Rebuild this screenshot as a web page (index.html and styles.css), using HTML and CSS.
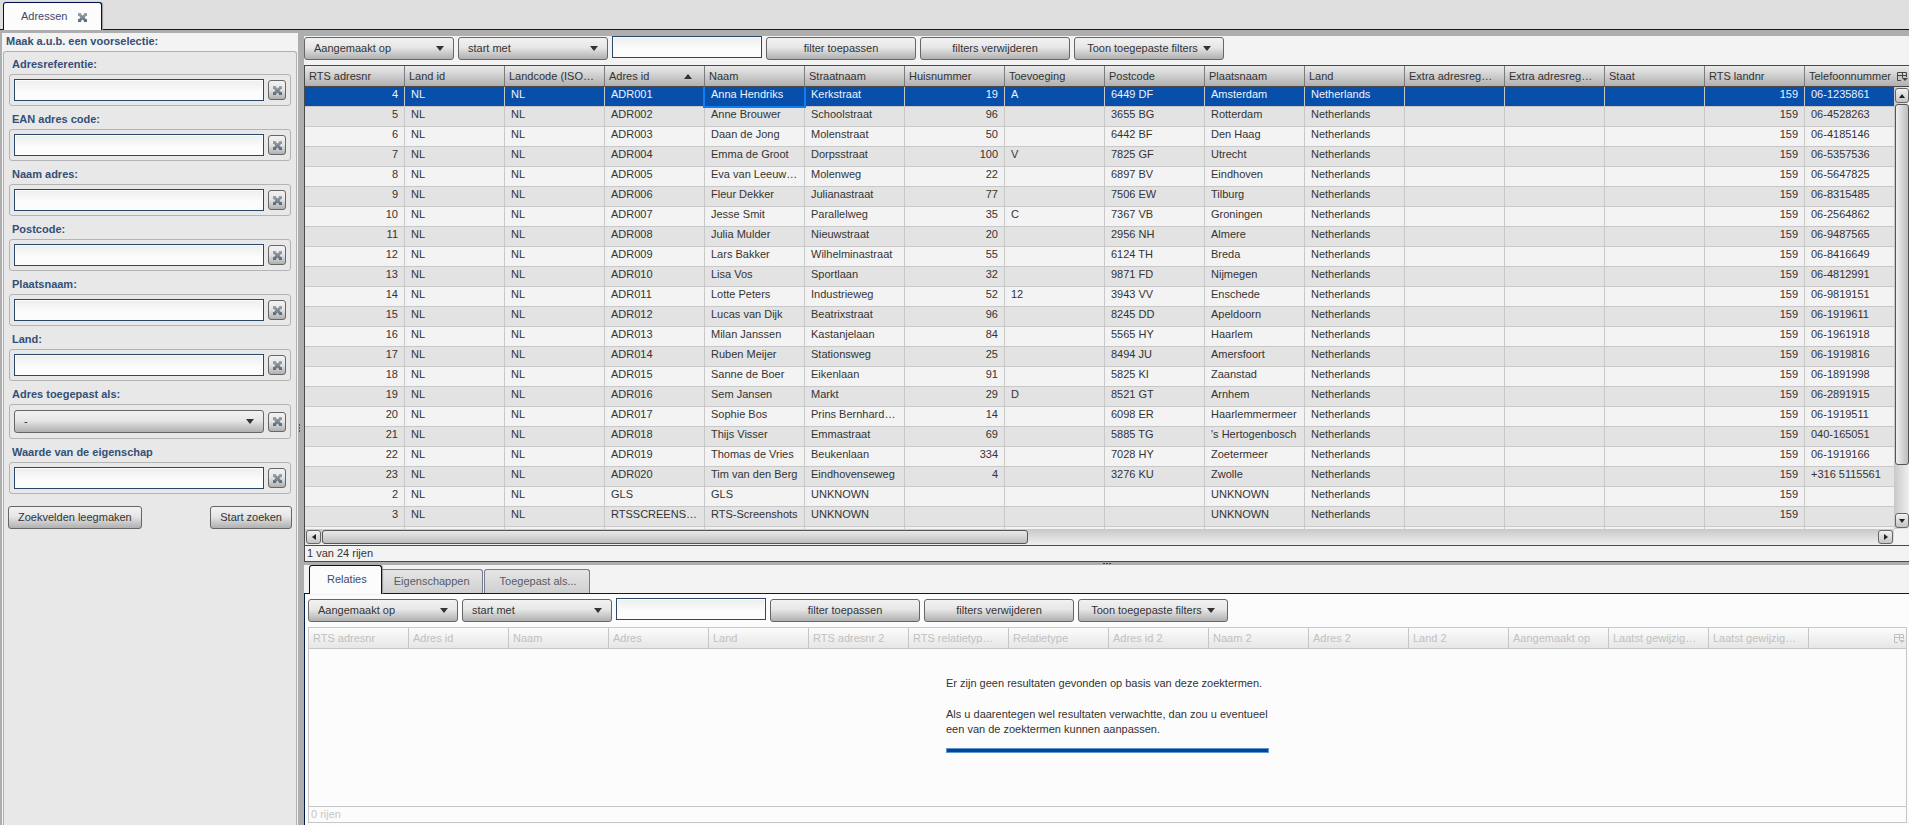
FILE: index.html
```html
<!DOCTYPE html>
<html lang="nl">
<head>
    <meta charset="utf-8">
    <title>Adressen</title>
    <link rel="stylesheet" href="styles.css">
</head>
<body>
    <svg class="defs" aria-hidden="true">
        <defs>
            <linearGradient id="cross-fill" x1="0" y1="0" x2="0" y2="1">
                <stop offset="0" stop-color="#a0a6ac"/>
                <stop offset="1" stop-color="#56687b"/>
            </linearGradient>
            <symbol id="cross" viewBox="0 0 9 9">
                <path fill="url(#cross-fill)" d="M0 0H3V1L4.5 2.5L6 1V0H9V3H8L6.5 4.5L8 6H9V9H6V8L4.5 6.5L3 8V9H0V6H1L2.5 4.5L1 3H0Z"/>
            </symbol>
            <symbol id="columns" viewBox="0 0 11 10">
                <path fill="none" stroke="currentColor" d="M4 8.5H.5V.5H9.5V5M.5 3.5H9.5M5.5 1V6"/>
                <path fill="currentColor" d="M5 6H11L8 9Z"/>
            </symbol>
        </defs>
    </svg>

    <header class="topbar">
        <div class="tab tab-active tab-main">
            <span>Adressen</span>
            <button class="tab-close" type="button" aria-label="Sluiten"><svg class="cross"><use href="#cross"/></svg></button>
        </div>
    </header>

    <div class="workspace">
        <aside class="sidebar">
            <h2 class="sidebar-title">Maak a.u.b. een voorselectie:</h2>
            <form class="search">
                <div class="field">
                    <label for="ref">Adresreferentie:</label>
                    <div class="field-box"><input class="text" id="ref" type="text"><button class="clear" type="button" aria-label="Wissen"><svg class="cross"><use href="#cross"/></svg></button></div>
                </div>
                <div class="field">
                    <label for="ean">EAN adres code:</label>
                    <div class="field-box"><input class="text" id="ean" type="text"><button class="clear" type="button" aria-label="Wissen"><svg class="cross"><use href="#cross"/></svg></button></div>
                </div>
                <div class="field">
                    <label for="naam">Naam adres:</label>
                    <div class="field-box"><input class="text" id="naam" type="text"><button class="clear" type="button" aria-label="Wissen"><svg class="cross"><use href="#cross"/></svg></button></div>
                </div>
                <div class="field">
                    <label for="postcode">Postcode:</label>
                    <div class="field-box"><input class="text" id="postcode" type="text"><button class="clear" type="button" aria-label="Wissen"><svg class="cross"><use href="#cross"/></svg></button></div>
                </div>
                <div class="field">
                    <label for="plaats">Plaatsnaam:</label>
                    <div class="field-box"><input class="text" id="plaats" type="text"><button class="clear" type="button" aria-label="Wissen"><svg class="cross"><use href="#cross"/></svg></button></div>
                </div>
                <div class="field">
                    <label for="land">Land:</label>
                    <div class="field-box"><input class="text" id="land" type="text"><button class="clear" type="button" aria-label="Wissen"><svg class="cross"><use href="#cross"/></svg></button></div>
                </div>
                <div class="field">
                    <label for="toegepast">Adres toegepast als:</label>
                    <div class="field-box field-box-select"><select class="btn select" id="toegepast"><option>-</option></select><button class="clear" type="button" aria-label="Wissen"><svg class="cross"><use href="#cross"/></svg></button></div>
                </div>
                <div class="field">
                    <label for="waarde">Waarde van de eigenschap</label>
                    <div class="field-box"><input class="text" id="waarde" type="text"><button class="clear" type="button" aria-label="Wissen"><svg class="cross"><use href="#cross"/></svg></button></div>
                </div>
                <div class="search-actions">
                    <button class="btn" type="reset">Zoekvelden leegmaken</button>
                    <button class="btn" type="button">Start zoeken</button>
                </div>
            </form>
        </aside>

        <div class="splitter splitter-v"><span class="grip"></span></div>

        <main class="content">
            <section class="pane">
                <div class="toolbar">
                    <select class="btn select" aria-label="Kolom"><option>Aangemaakt op</option></select>
                    <select class="btn select" aria-label="Vergelijking"><option>start met</option></select>
                    <input class="text" type="text" aria-label="Filterwaarde">
                    <button class="btn" type="button">filter toepassen</button>
                    <button class="btn" type="button">filters verwijderen</button>
                    <button class="btn btn-menu" type="button">Toon toegepaste filters</button>
                </div>
                <div class="grid">
                    <div class="grid-view">
                        <table class="data">
                            <thead>
                                <tr>
                                    <th>RTS adresnr</th>
                                    <th>Land id</th>
                                    <th>Landcode (ISO-3166)</th>
                                    <th class="sorted">Adres id</th>
                                    <th>Naam</th>
                                    <th>Straatnaam</th>
                                    <th>Huisnummer</th>
                                    <th>Toevoeging</th>
                                    <th>Postcode</th>
                                    <th>Plaatsnaam</th>
                                    <th>Land</th>
                                    <th>Extra adresregel 1</th>
                                    <th>Extra adresregel 2</th>
                                    <th>Staat</th>
                                    <th>RTS landnr</th>
                                    <th class="last">Telefoonnummer</th>
                                </tr>
                            </thead>
                            <tbody id="adressen"></tbody>
                        </table>
                    </div>
                    <button class="column-control" type="button" aria-label="Kolommen"><svg><use href="#columns"/></svg></button>
                    <div class="scroll scroll-v">
                        <button class="scroll-btn up" type="button" aria-label="Omhoog"></button>
                        <span class="thumb"></span>
                        <button class="scroll-btn down" type="button" aria-label="Omlaag"></button>
                    </div>
                    <div class="scroll scroll-h">
                        <button class="scroll-btn left" type="button" aria-label="Links"></button>
                        <span class="thumb"></span>
                        <button class="scroll-btn right" type="button" aria-label="Rechts"></button>
                    </div>
                    <div class="status">1 van 24 rijen</div>
                </div>
            </section>

            <div class="splitter splitter-h"><span class="grip"></span></div>

            <section class="pane pane-detail">
                <nav class="tabs">
                    <button class="tab tab-active" type="button">Relaties</button>
                    <button class="tab" type="button">Eigenschappen</button>
                    <button class="tab" type="button">Toegepast als...</button>
                </nav>
                <div class="detail">
                    <div class="toolbar">
                        <select class="btn select" aria-label="Kolom"><option>Aangemaakt op</option></select>
                        <select class="btn select" aria-label="Vergelijking"><option>start met</option></select>
                        <input class="text" type="text" aria-label="Filterwaarde">
                        <button class="btn" type="button">filter toepassen</button>
                        <button class="btn" type="button">filters verwijderen</button>
                        <button class="btn btn-menu" type="button">Toon toegepaste filters</button>
                    </div>
                    <div class="grid grid-disabled">
                        <div class="grid-view">
                            <table class="data">
                                <thead>
                                    <tr>
                                        <th>RTS adresnr</th>
                                        <th>Adres id</th>
                                        <th>Naam</th>
                                        <th>Adres</th>
                                        <th>Land</th>
                                        <th>RTS adresnr 2</th>
                                        <th>RTS relatietypenummer</th>
                                        <th>Relatietype</th>
                                        <th>Adres id 2</th>
                                        <th>Naam 2</th>
                                        <th>Adres 2</th>
                                        <th>Land 2</th>
                                        <th>Aangemaakt op</th>
                                        <th>Laatst gewijzigd op</th>
                                        <th>Laatst gewijzigd door</th>
                                        <th class="last"></th>
                                    </tr>
                                </thead>
                            </table>
                            <div class="empty">
                                <p>Er zijn geen resultaten gevonden op basis van deze zoektermen.</p>
                                <p>Als u daarentegen wel resultaten verwachtte, dan zou u eventueel een van de zoektermen kunnen aanpassen.</p>
                                <div class="empty-bar"></div>
                            </div>
                        </div>
                        <button class="column-control" type="button" aria-label="Kolommen" disabled><svg><use href="#columns"/></svg></button>
                        <div class="status">0 rijen</div>
                    </div>
                </div>
            </section>
        </main>
    </div>
    <script src="script.js"></script>
</body>
</html>
```

FILE: styles.css
```css
* {
    box-sizing: border-box;
}

body {
    margin: 0;
    height: 100vh;
    display: flex;
    flex-direction: column;
    overflow: hidden;
    background: #aeaeae;
    color: #333;
    font: 11px/15px "Liberation Sans", Arial, sans-serif;
}

button, input, select {
    margin: 0;
    padding: 0;
    font: inherit;
    color: inherit;
}

.defs {
    position: absolute;
    width: 0;
    height: 0;
}

/* tabs */
.topbar {
    display: flex;
    align-items: flex-end;
    height: 30px;
    padding-left: 3px;
    background: #dfdfdf;
    border-bottom: 1px solid #001a4a;
}

.tab {
    height: 24px;
    padding: 0 12px 0 15px;
    border: 1px solid #737a8c;
    border-bottom: 0;
    border-radius: 3px 3px 0 0;
    background: linear-gradient(#e6e6e6, #cfcfcf);
    color: #555b66;
}

.tab-active {
    position: relative;
    z-index: 1;
    height: 29px;
    margin-bottom: -1px;
    padding: 0 14px 0 17px;
    border-color: #00104f;
    background: #fcfcfc;
    box-shadow: 1px 0 1px #999;
    color: #3c4b6b;
}

.tab-main {
    display: flex;
    align-items: center;
    gap: 11px;
    height: 28px;
}

.tab-close {
    display: flex;
    margin-top: 2px;
    border: 0;
    background: none;
}

.cross {
    display: block;
    width: 9px;
    height: 9px;
}

/* sidebar */
.workspace {
    flex: 1;
    display: flex;
    min-height: 0;
}

.sidebar {
    width: 296px;
    margin: 3px 0 0 2px;
    padding: 0 1px;
    display: flex;
    flex-direction: column;
    background: #f3f3f3;
}

.sidebar-title {
    margin: 0;
    padding: 0 0 2px 3px;
    font-size: 11px;
    line-height: 16px;
    color: #344f77;
}

.search {
    flex: 1;
    display: flex;
    flex-direction: column;
    gap: 3px;
    padding: 2px 5px 0;
    border: 1px solid #b0b0b0;
    border-bottom: 0;
    border-radius: 3px 3px 0 0;
    background: #e8e8e8;
}

.field label {
    display: block;
    padding-left: 3px;
    font-weight: bold;
    line-height: 20px;
    color: #344f77;
}

.field-box {
    display: flex;
    align-items: center;
    gap: 4px;
    padding: 4px;
    border: 1px solid #b4b4b4;
    border-radius: 3px;
}

.field-box-select {
    min-height: 35px;
}

.field-box .text,
.field-box .select {
    flex: 1;
    min-width: 0;
}

.text {
    height: 22px;
    padding: 0 4px;
    border: 1px solid #2c4668;
    border-radius: 0;
    background: linear-gradient(#ededed, #fcfcfc 60%);
    box-shadow: inset 0 0 0 1px #fcfcfc;
}

.btn,
.clear,
.scroll-btn {
    border: 1px solid #666;
    border-radius: 3px;
    background: linear-gradient(#f2f2f2, #e6e6e6 45%, #b0b0b0);
}

.btn {
    height: 23px;
    padding: 0 9px;
}

.clear {
    display: flex;
    align-items: center;
    justify-content: center;
    width: 18px;
    height: 20px;
}

.select {
    appearance: none;
    padding: 0 24px 0 9px;
    background:
        url("data:image/svg+xml,%3Csvg xmlns='http://www.w3.org/2000/svg' width='8' height='5'%3E%3Cpath fill='%23333' d='M0 0h8L4 5z'/%3E%3C/svg%3E") right 9px center no-repeat,
        linear-gradient(#f2f2f2, #e6e6e6 45%, #b0b0b0);
}

.btn-menu::after {
    content: "";
    display: inline-block;
    margin: 0 0 1px 5px;
    border: 4px solid transparent;
    border-top: 5px solid #333;
    border-bottom: 0;
}

.search-actions {
    display: flex;
    justify-content: space-between;
    margin: 9px -1px 0;
}

/* splitters */
.splitter {
    display: flex;
    align-items: center;
    justify-content: center;
}

.splitter-v {
    width: 6px;
    justify-content: flex-start;
    padding-left: 1px;
}

.splitter-v .grip {
    width: 1px;
    height: 8px;
    background: repeating-linear-gradient(#555 0 2px, transparent 2px 3px);
}

.splitter-h .grip {
    width: 8px;
    height: 1px;
    background: repeating-linear-gradient(90deg, #444 0 2px, transparent 2px 3px);
}

/* right side */
.content {
    flex: 1;
    min-width: 0;
    margin-top: 6px;
    display: grid;
    grid-template-columns: minmax(0, 1fr);
    grid-template-rows: minmax(0, 263fr) 3px minmax(0, 130fr);
}

.pane {
    display: flex;
    flex-direction: column;
    min-height: 0;
    background: #f3f3f3;
}

.toolbar {
    display: flex;
    gap: 4px;
    height: 29px;
}

.toolbar .btn {
    width: 150px;
    margin-top: 1px;
}

.toolbar .text {
    width: 150px;
}

/* the header runs over the scrollbar column, so the view spans both */
.grid {
    flex: 1;
    min-height: 0;
    display: grid;
    grid-template-columns: minmax(0, 1fr) 15px;
    grid-template-rows: 21px minmax(0, 1fr) auto auto;
    border: 1px solid #4a4a4a;
    border-right: 0;
}

.grid-view {
    grid-area: 1 / 1 / 3 / 3;
    overflow: hidden;
}

.data {
    width: 100%;
    table-layout: fixed;
    border-collapse: separate;
    border-spacing: 0;
}

.data th {
    width: 100px;
    height: 21px;
    padding: 0 9px 0 4px;
    border-right: 1px solid #7a7a7a;
    border-bottom: 1px solid #4a4a4a;
    background: linear-gradient(#ebebeb, #b0b0b0);
    font-weight: normal;
    text-align: left;
    white-space: nowrap;
    overflow: hidden;
    text-overflow: ellipsis;
}

.data th.last {
    width: auto;
    border-right: 0;
}

.data th.sorted::after {
    content: "";
    float: right;
    margin: 5px 3px 0 0;
    border: 4px solid transparent;
    border-bottom: 5px solid #333;
    border-top: 0;
}

.data td {
    height: 20px;
    padding: 0 5px 0 6px;
    border-right: 1px solid #c8c8c8;
    border-bottom: 1px solid #c8c8c8;
    background: #f3f3f3;
    line-height: 14px;
    vertical-align: top;
    white-space: nowrap;
    overflow: hidden;
    text-overflow: ellipsis;
}

.data tbody tr:nth-child(even) td {
    background: #e3e3e3;
}

.data tbody tr.selected td {
    background: #084fab;
    color: #eef3fa;
}

.data td.num {
    padding-right: 6px;
    text-align: right;
}

.data td.focus {
    position: relative;
    overflow: visible;
}

.data td.focus::after {
    content: "";
    position: absolute;
    inset: 0 -2px -2px -2px;
    border: 2px solid #0d7ff0;
    border-top: 0;
}

.column-control {
    grid-area: 1 / 2;
    z-index: 1;
    align-self: center;
    border: 0;
    background: none;
    color: #444;
}

.column-control svg {
    display: block;
    width: 11px;
    height: 10px;
    margin-left: 3px;
}

.status {
    grid-area: 4 / 1 / 5 / 3;
    padding-left: 2px;
    border-top: 1px solid #4a4a4a;
}

/* scrollbars */
.scroll {
    z-index: 1;
    display: flex;
    gap: 1px;
    padding: 1px;
}

.scroll-v {
    grid-area: 2 / 2;
    flex-direction: column;
    padding-right: 0;
    background: linear-gradient(90deg, #c8c8c8, #efefef);
}

.scroll-h {
    grid-area: 3 / 1;
    height: 16px;
    background: linear-gradient(#c8c8c8, #efefef);
}

.scroll-btn {
    display: flex;
    align-items: center;
    justify-content: center;
    width: 15px;
    height: 14px;
    background: linear-gradient(#f2f2f2, #c4c4c4);
}

.scroll-v .scroll-btn {
    width: 14px;
    height: 15px;
}

.scroll-btn::before {
    content: "";
    border: 3px solid transparent;
}

.up::before {
    border-bottom: 4px solid #222;
    border-top: 0;
}

.down::before {
    border-top: 4px solid #222;
    border-bottom: 0;
}

.left::before {
    border-right: 4px solid #222;
    border-left: 0;
}

.right::before {
    border-left: 4px solid #222;
    border-right: 0;
}

.down {
    margin-top: auto;
}

.right {
    margin-left: auto;
}

.thumb {
    border: 1px solid #555;
    border-radius: 3px;
}

.scroll-v .thumb {
    height: 82%;
    background: linear-gradient(90deg, #f0f0f0, #bdbdbd);
}

.scroll-h .thumb {
    width: 44.5%;
    background: linear-gradient(#eaeaea, #bdbdbd);
}

/* detail pane */
.tabs {
    display: flex;
    align-items: flex-end;
    height: 29px;
    padding-left: 5px;
    border-bottom: 1px solid #001a4a;
}

.tabs .tab {
    margin-right: 1px;
}

.tabs .tab-active {
    padding-bottom: 2px;
    margin-right: -4px;
}

.detail {
    flex: 1;
    min-height: 0;
    display: flex;
    flex-direction: column;
    padding: 4px 2px 2px 3px;
    border-left: 1px solid #001a4a;
    background: #fcfcfc;
}

.grid-disabled {
    border: 1px solid #c6c6c6;
}

.grid-disabled .data th {
    border-color: #c6c6c6;
    background: linear-gradient(#fcfcfc, #e6e6e6);
    color: #c0c0c0;
}

.grid-disabled .status {
    border-color: #c6c6c6;
    color: #c6c6c6;
}

.grid-disabled .column-control {
    color: #c0c0c0;
}

.empty {
    width: 323px;
    margin: 27px auto 0;
}

.empty p {
    margin: 0 0 16px;
}

.empty p + p {
    margin-bottom: 11px;
}

.empty-bar {
    height: 5px;
    border: 1px solid #5c96cc;
    background: #0045a0;
}
```

FILE: script.js
```js
// id, adres id, naam, straat, huisnummer, toevoeging, postcode, plaats, telefoon
var adressen = [
    [4, 'ADR001', 'Anna Hendriks', 'Kerkstraat', 19, 'A', '6449 DF', 'Amsterdam', '06-1235861'],
    [5, 'ADR002', 'Anne Brouwer', 'Schoolstraat', 96, '', '3655 BG', 'Rotterdam', '06-4528263'],
    [6, 'ADR003', 'Daan de Jong', 'Molenstraat', 50, '', '6442 BF', 'Den Haag', '06-4185146'],
    [7, 'ADR004', 'Emma de Groot', 'Dorpsstraat', 100, 'V', '7825 GF', 'Utrecht', '06-5357536'],
    [8, 'ADR005', 'Eva van Leeuwenhoek', 'Molenweg', 22, '', '6897 BV', 'Eindhoven', '06-5647825'],
    [9, 'ADR006', 'Fleur Dekker', 'Julianastraat', 77, '', '7506 EW', 'Tilburg', '06-8315485'],
    [10, 'ADR007', 'Jesse Smit', 'Parallelweg', 35, 'C', '7367 VB', 'Groningen', '06-2564862'],
    [11, 'ADR008', 'Julia Mulder', 'Nieuwstraat', 20, '', '2956 NH', 'Almere', '06-9487565'],
    [12, 'ADR009', 'Lars Bakker', 'Wilhelminastraat', 55, '', '6124 TH', 'Breda', '06-8416649'],
    [13, 'ADR010', 'Lisa Vos', 'Sportlaan', 32, '', '9871 FD', 'Nijmegen', '06-4812991'],
    [14, 'ADR011', 'Lotte Peters', 'Industrieweg', 52, '12', '3943 VV', 'Enschede', '06-9819151'],
    [15, 'ADR012', 'Lucas van Dijk', 'Beatrixstraat', 96, '', '8245 DD', 'Apeldoorn', '06-1919611'],
    [16, 'ADR013', 'Milan Janssen', 'Kastanjelaan', 84, '', '5565 HY', 'Haarlem', '06-1961918'],
    [17, 'ADR014', 'Ruben Meijer', 'Stationsweg', 25, '', '8494 JU', 'Amersfoort', '06-1919816'],
    [18, 'ADR015', 'Sanne de Boer', 'Eikenlaan', 91, '', '5825 KI', 'Zaanstad', '06-1891998'],
    [19, 'ADR016', 'Sem Jansen', 'Markt', 29, 'D', '8521 GT', 'Arnhem', '06-2891915'],
    [20, 'ADR017', 'Sophie Bos', 'Prins Bernhardstraat', 14, '', '6098 ER', 'Haarlemmermeer', '06-1919511'],
    [21, 'ADR018', 'Thijs Visser', 'Emmastraat', 69, '', '5885 TG', "'s Hertogenbosch", '040-165051'],
    [22, 'ADR019', 'Thomas de Vries', 'Beukenlaan', 334, '', '7028 HY', 'Zoetermeer', '06-1919166'],
    [23, 'ADR020', 'Tim van den Berg', 'Eindhovenseweg', 4, '', '3276 KU', 'Zwolle', '+316 5115561'],
    [2, 'GLS', 'GLS', 'UNKNOWN', '', '', '', 'UNKNOWN', ''],
    [3, 'RTSSCREENSHOTS', 'RTS-Screenshots', 'UNKNOWN', '', '', '', 'UNKNOWN', ''],
    []
];

var numeric = [0, 6, 14];
var body = document.getElementById('adressen');

adressen.forEach(function (a, index) {
    var row = body.insertRow();
    var cells = [a[0], 'NL', 'NL', a[1], a[2], a[3], a[4], a[5], a[6], a[7], 'Netherlands', '', '', '', 159, a[8]];

    if (index === 0) {
        row.className = 'selected';
    }
    cells.forEach(function (value, i) {
        var cell = row.insertCell();
        cell.textContent = a.length ? value : '';
        if (numeric.indexOf(i) !== -1) {
            cell.className = 'num';
        }
        if (index === 0 && i === 4) {
            cell.className = 'focus';
        }
    });
});
```
